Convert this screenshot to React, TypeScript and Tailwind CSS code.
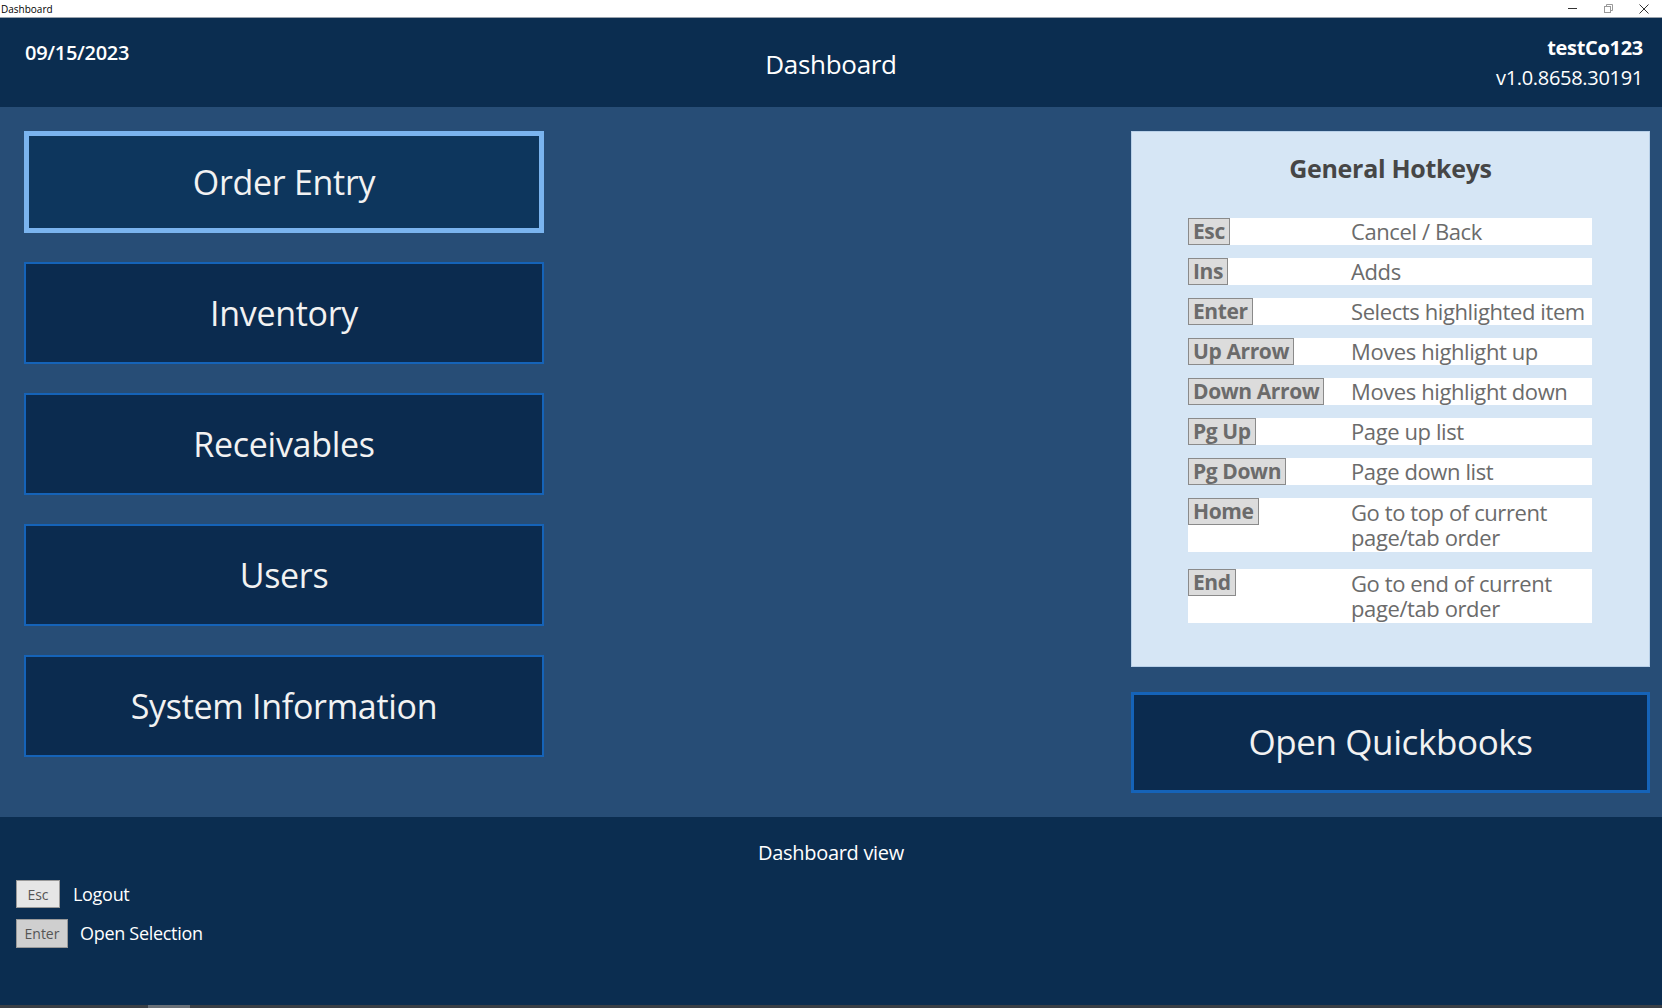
const font = { fontFamily: '"Open Sans", "Noto Sans", sans-serif' };

const menuItems = ['Order Entry', 'Inventory', 'Receivables', 'Users', 'System Information'];

const hotkeys: { key: string; desc: string; tall?: boolean }[] = [
  { key: 'Esc', desc: 'Cancel / Back' },
  { key: 'Ins', desc: 'Adds' },
  { key: 'Enter', desc: 'Selects highlighted item' },
  { key: 'Up Arrow', desc: 'Moves highlight up' },
  { key: 'Down Arrow', desc: 'Moves highlight down' },
  { key: 'Pg Up', desc: 'Page up list' },
  { key: 'Pg Down', desc: 'Page down list' },
  { key: 'Home', desc: 'Go to top of current page/tab order', tall: true },
  { key: 'End', desc: 'Go to end of current page/tab order', tall: true },
];

function TitleBar() {
  return (
    <div className="h-[18px] flex items-center justify-between bg-white border-b border-[#9aa3ad]">
      <span className="text-[10px] leading-none text-black pl-[1px]">Dashboard</span>
      <div className="flex items-center h-full text-[#333]">
        <div className="w-[36px] flex justify-center">
          <div className="w-[9px] h-[1px] bg-[#333]" />
        </div>
        <div className="w-[36px] flex justify-center">
          <svg width="9" height="9" viewBox="0 0 9 9" fill="none" stroke="#999" strokeWidth="1">
            <rect x="0.5" y="2.5" width="6" height="6" />
            <path d="M2.5 2.5V0.5H8.5V6.5H6.5" />
          </svg>
        </div>
        <div className="w-[36px] flex justify-center">
          <svg width="10" height="10" viewBox="0 0 10 10" stroke="#333" strokeWidth="1">
            <path d="M0.5 0.5L9.5 9.5M9.5 0.5L0.5 9.5" />
          </svg>
        </div>
      </div>
    </div>
  );
}

function Header() {
  return (
    <div className="h-[89px] bg-[#0b2d50] text-white flex justify-between pr-[19px] pl-[25px] relative">
      <div className="pt-[20px] text-[20px] font-semibold tracking-[-0.3px]">09/15/2023</div>
      <div className="absolute left-0 right-0 top-[27px] text-center text-[26px] font-medium tracking-[-0.3px]">Dashboard</div>
      <div className="pt-[15px] text-right leading-[30px]">
        <div className="text-[20px] font-bold tracking-[-0.3px]">testCo123</div>
        <div className="text-[20px] tracking-[-0.3px]">v1.0.8658.30191</div>
      </div>
    </div>
  );
}

function MenuButton({ label, active }: { label: string; active?: boolean }) {
  return (
    <div
      className={
        active
          ? 'h-[102px] bg-[#0d365d] border-[5px] border-[#7ab4ef] flex items-center justify-center text-[34px] text-[#f2f2f2] tracking-[-0.3px]'
          : 'h-[102px] bg-[#0b2b4f] border-[2px] border-[#1563b8] flex items-center justify-center text-[34px] text-[#f2f2f2] tracking-[-0.3px]'
      }
    >
      {label}
    </div>
  );
}

function HotkeyPanel() {
  return (
    <div className="h-[536px] bg-[#d6e6f5] border border-[#b8d0e8] pt-[18px]">
      <div className="text-center text-[25px] font-bold text-[#464646] tracking-[-0.3px]">General Hotkeys</div>
      <div className="mt-[30px] pl-[56px] pr-[57px] flex flex-col gap-[13px]">
        {hotkeys.map((h) => (
          <div key={h.key} className={h.tall ? 'bg-white flex mb-[4px]' : 'bg-white flex'}>
            <div className="w-[163px] shrink-0 self-start">
              <span className="inline-block h-[27px] leading-[25px] bg-[#dcdcdc] border border-[#8a8a8a] px-[4px] text-[21px] font-bold text-[#6b6b6b] tracking-[-0.4px]">
                {h.key}
              </span>
            </div>
            <div
              className={
                h.tall
                  ? 'w-[210px] text-[22px] leading-[25px] text-[#6b6b6b] tracking-[-0.4px] py-[2px]'
                  : 'text-[22px] leading-[25px] text-[#6b6b6b] tracking-[-0.4px] py-[1px] whitespace-nowrap'
              }
            >
              {h.desc}
            </div>
          </div>
        ))}
      </div>
    </div>
  );
}

function Footer() {
  return (
    <div className="h-[188px] bg-[#0b2d50] text-white relative">
      <div className="pt-[21px] text-center text-[20px] tracking-[-0.3px]">Dashboard view</div>
      <div className="absolute left-[16px] top-[63px] flex flex-col gap-[11px]">
        <div className="flex items-center gap-[13px]">
          <span className="w-[44px] h-[28px] bg-[#e6e6e6] border border-[#999] text-[#555] text-[14px] flex items-center justify-center">Esc</span>
          <span className="text-[18px] tracking-[-0.3px]">Logout</span>
        </div>
        <div className="flex items-center gap-[12px]">
          <span className="w-[52px] h-[29px] bg-[#cfcfcf] border border-[#999] text-[#555] text-[14px] flex items-center justify-center">Enter</span>
          <span className="text-[18px] tracking-[-0.3px]">Open Selection</span>
        </div>
      </div>
    </div>
  );
}

export default function App() {
  return (
    <div className="w-[1662px] h-[1008px] flex flex-col overflow-hidden bg-[#0b2d50]" style={font}>
      <TitleBar />
      <Header />
      <div className="h-[710px] bg-[#274d76] flex justify-between pl-[24px] pr-[12px] pt-[24px]">
        <div className="w-[520px] flex flex-col gap-[29px]">
          {menuItems.map((m, i) => (
            <MenuButton key={m} label={m} active={i === 0} />
          ))}
        </div>
        <div className="w-[519px] flex flex-col gap-[25px]">
          <HotkeyPanel />
          <div className="h-[101px] bg-[#0b2b4f] border-[3px] border-[#1563b8] flex items-center justify-center text-[35px] text-[#f2f2f2] tracking-[-0.4px]">
            Open Quickbooks
          </div>
        </div>
      </div>
      <Footer />
      <div className="h-[3px] bg-[#3a3f45] flex">
        <div className="ml-[148px] w-[42px] bg-[#6a7077]" />
      </div>
    </div>
  );
}
